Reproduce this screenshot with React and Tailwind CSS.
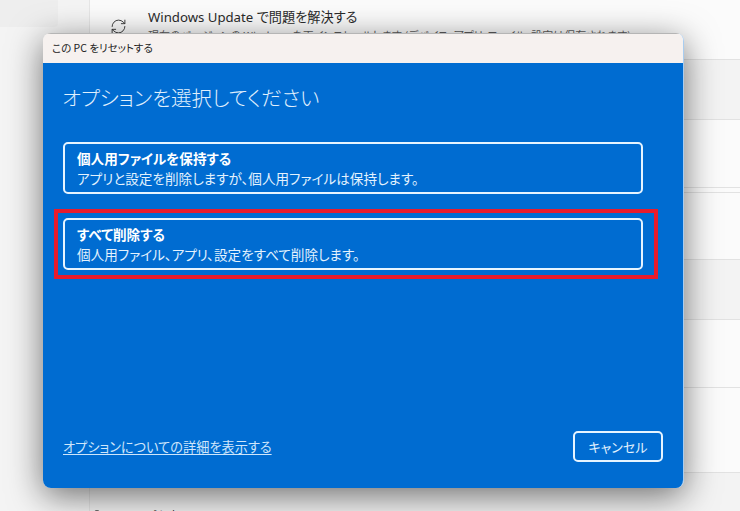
import React from "react";
import { RefreshCw, Search } from "lucide-react";

const font = "font-['Noto_Sans_CJK_JP','Noto_Sans_CJK_SC',sans-serif] [font-feature-settings:'palt']";

function Row({ h, gray, children }) {
  return (
    <div className={`${h} shrink-0 ${gray ? "bg-[#f3f3f3]" : "bg-[#fbfbfb]"} border-b border-[#e2e2e2] flex`}>
      {children}
    </div>
  );
}

function Option({ title, desc }) {
  return (
    <div className="border-2 border-[#e6f4ff] rounded-[5px] pl-[12px] pt-[4px] h-[52px] text-[13.6px] leading-[20px] text-[#e3f2fe]">
      <div className="font-bold text-white">{title}</div>
      <div>{desc}</div>
    </div>
  );
}

export default function App() {
  return (
    <div className={`${font} relative w-[740px] h-[511px] overflow-hidden bg-[#fbfbfb]`}>
      {/* Settings page behind the dialog */}
      <div className="flex h-full">
        <div className="w-[90px] shrink-0 bg-[#f4f4f4] border-r border-[#e6e6e6]">
          <div className="w-[58px] h-[27px] bg-[#eeeeee] rounded-br-[4px]" />
        </div>
        <div className="flex-1 flex flex-col min-h-0">
          <Row h="h-[60px]">
            <div className="pl-[20px] pt-[18px]">
              <RefreshCw size={17} strokeWidth={1.3} className="text-[#333333]" />
            </div>
            <div className="pl-[21px] pt-[7px] text-[#2a2a2a]">
              <div className="text-[13.2px] leading-[20px] font-['Noto_Sans','Noto_Sans_CJK_JP',sans-serif]">Windows Update で問題を解決する</div>
              <div className="text-[11px] leading-[16px] text-[#5c5c5c] whitespace-nowrap">現在のバージョンの Windows を再インストールします (デバイス、アプリ、ファイル、設定は保存されます)</div>
            </div>
          </Row>
          <Row h="h-[60px]" gray />
          <Row h="h-[68px]" />
          <Row h="h-[5px]" />
          <Row h="h-[67px]" />
          <Row h="h-[60px]" gray />
          <Row h="h-[68px]" />
          <Row h="h-[85px]" />
          <div className="h-[38px] shrink-0 bg-[#f3f3f3] flex pl-[1px] pt-[34px] text-[12px] leading-[18px] text-[#1f1f1f]">
            <Search size={13} strokeWidth={1.5} className="mt-[2px] shrink-0" />
            <div className="pl-[18px]">ヘルプを表示</div>
          </div>
        </div>
      </div>

      {/* Modal dialog */}
      <div className="absolute left-[43px] top-[33px] w-[641px] h-[455px] rounded-[8px] overflow-hidden flex flex-col border-r border-[#a9cdf0] shadow-[0_8px_34px_rgba(0,0,0,0.55)]">
        <div className="h-[30px] shrink-0 bg-[#f6f1ef] border-t border-[#b5b5b5] pl-[9px] text-[10.5px] leading-[28px] text-[#222222]">
          この PC をリセットする
        </div>
        <div className="flex-1 bg-[#006cd1] flex flex-col pl-[20px] pr-[20px] relative">
          <h1 className="text-[20.5px] leading-[30px] font-light text-[#e0f0fd] pt-[19px] h-[79px] -ml-[1px]">オプションを選択してください</h1>
          <div className="w-[580px] flex flex-col gap-[24px]">
            <Option title="個人用ファイルを保持する" desc="アプリと設定を削除しますが、個人用ファイルは保持します。" />
            <Option title="すべて削除する" desc="個人用ファイル、アプリ、設定をすべて削除します。" />
          </div>
          <div className="mt-auto mb-[26px] flex items-center justify-between">
            <a className="text-[13.2px] leading-[18px] text-[#cfe6fb] underline underline-offset-2">オプションについての詳細を表示する</a>
            <div className="w-[90px] h-[31px] border-2 border-[#e6f4ff] rounded-[5px] flex items-center justify-center text-[13px] text-[#e3f2fe]">キャンセル</div>
          </div>
        </div>
      </div>

      {/* Red annotation rectangle */}
      <div className="absolute left-[54px] top-[209px] w-[604px] h-[70px] border-[4px] border-[#e81c2c]" />
    </div>
  );
}
